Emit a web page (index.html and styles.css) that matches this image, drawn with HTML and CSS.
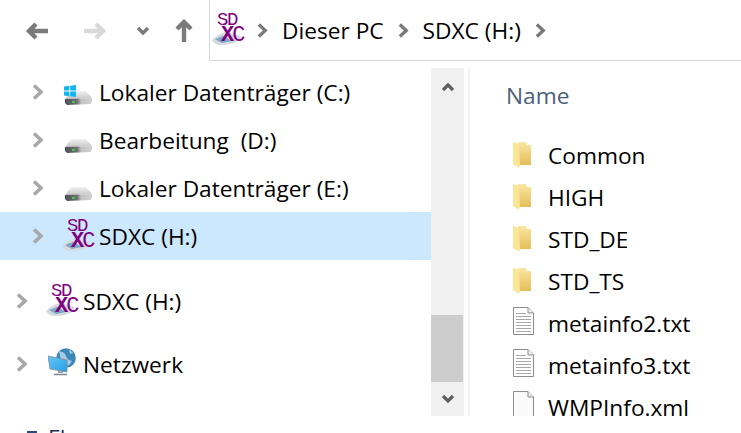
FILE: index.html
```html
<!DOCTYPE html>
<html lang="de">
<head>
<meta charset="utf-8">
<title>SDXC (H:)</title>
<link rel="stylesheet" href="styles.css">
</head>
<body>
<svg class="defs" width="0" height="0" aria-hidden="true">
  <defs>
    <linearGradient id="top" x1="0" y1="0" x2="0" y2="1"><stop offset="0" stop-color="#f2f2f2"/><stop offset="1" stop-color="#c6c6c6"/></linearGradient>
    <linearGradient id="front" x1="0" y1="0" x2="1" y2="0"><stop offset="0" stop-color="#4f5254"/><stop offset=".45" stop-color="#6d7072"/><stop offset=".6" stop-color="#c2c2c2"/><stop offset="1" stop-color="#d2d2d2"/></linearGradient>
    <linearGradient id="fold" x1="0" y1="0" x2="0" y2="1"><stop offset="0" stop-color="#f9e7a3"/><stop offset="1" stop-color="#e5bd58"/></linearGradient>
    <linearGradient id="mon" x1="0" y1="0" x2="1" y2="1"><stop offset="0" stop-color="#63c7f7"/><stop offset="1" stop-color="#2a9de6"/></linearGradient>
    <symbol id="chev" viewBox="0 0 12 16"><path d="M2 1.500 9 8 2 14.500" fill="none" stroke="currentColor" stroke-width="3.600"/></symbol>
    <symbol id="drive" viewBox="0 0 28 16"><path d="M7 1H22L28 8 1 9Z" fill="url(#top)"/><path d="M1 9 28 8V12L26 14 3 15 1 13Z" fill="url(#front)"/><rect x="8" y="11" width="3" height="2" fill="#45c84a"/></symbol>
    <symbol id="card" viewBox="0 0 34 36">
      <path d="M0 28Q8 20 16 20L28 24V28Q20 33 10 33 2 33 0 28Z" fill="#d5dade"/><path d="M3 27 11 24 20 29 10 31Z" fill="#7ba7c9"/>
    </symbol>
    <symbol id="folder" viewBox="0 0 18 27"><path d="M5 1H13L14 4H18V24H5Z" fill="url(#fold)"/><path d="M0 1 6 3 7 24 6 27 0 23Z" fill="#fbe596"/></symbol>
    <symbol id="doc" viewBox="0 0 21 28"><path d="M.5.5H15L20.500 6V27.500H.5Z" fill="#fff" stroke="#8d8d8d"/><path d="M15 .5V6H20.500" fill="#eee" stroke="#8d8d8d"/><path d="M3 6.500H13M3 9.500H18M3 12.500H18M3 15.500H18M3 18.500H18M3 21.500H18M3 24.500H18" stroke="#a8a8a8"/></symbol>
  </defs>
</svg>
<div class="window">
  <header class="toolbar">
    <nav class="nav">
      <svg class="nav-back" width="24" height="20" viewBox="0 0 24 20"><path d="M23 10H5M11 3 4 10l7 7" fill="none" stroke="#7a7a7a" stroke-width="4.400"/></svg>
      <svg class="nav-fwd" width="24" height="20" viewBox="0 0 24 20"><path d="M1 10H19M13 3l7 7-7 7" fill="none" stroke="#d9d9d9" stroke-width="4.400"/></svg>
      <svg class="nav-down" width="14" height="10" viewBox="0 0 14 10"><path d="M2 2 7 7l5-5" fill="none" stroke="#7a7a7a" stroke-width="3.400"/></svg>
      <svg class="nav-up" width="20" height="24" viewBox="0 0 20 24"><path d="M10 23V5M3 10 10 3l7 7" fill="none" stroke="#7a7a7a" stroke-width="4.400"/></svg>
    </nav>
    <div class="address">
      <span class="sd sd-addr"><svg class="card"><use href="#card"/></svg><b class="l1">SD</b><b class="l2"><strong>X</strong>C</b></span>
      <svg class="crumb"><use href="#chev"/></svg>
      <span class="crumb-text">Dieser PC</span>
      <svg class="crumb"><use href="#chev"/></svg>
      <span class="crumb-text">SDXC (H:)</span>
      <svg class="crumb"><use href="#chev"/></svg>
    </div>
  </header>
  <main class="panes">
    <aside class="tree">
      <div class="rows">
        <div class="row">
          <svg class="exp"><use href="#chev"/></svg>
          <span class="ico"><svg class="hdd"><use href="#drive"/></svg><svg class="win" viewBox="0 0 12 12"><path d="M0 1.500 5.300.8V5.600H0ZM6.200.7 12 0V5.600H6.200ZM0 6.400H5.300V11.200L0 10.500ZM6.200 6.400H12V12L6.200 11.300Z" fill="#12b5ee"/></svg></span>
          <span>Lokaler Datenträger (C:)</span>
        </div>
        <div class="row"><svg class="exp"><use href="#chev"/></svg><span class="ico"><svg class="hdd"><use href="#drive"/></svg></span><span>Bearbeitung&nbsp; (D:)</span></div>
        <div class="row"><svg class="exp"><use href="#chev"/></svg><span class="ico"><svg class="hdd"><use href="#drive"/></svg></span><span>Lokaler Datenträger (E:)</span></div>
        <div class="row selected"><svg class="exp"><use href="#chev"/></svg><span class="sd sd-tree"><svg class="card"><use href="#card"/></svg><b class="l1">SD</b><b class="l2"><strong>X</strong>C</b></span><span>SDXC (H:)</span></div>
        <div class="row lvl1 gap1"><svg class="exp"><use href="#chev"/></svg><span class="sd sd-tree"><svg class="card"><use href="#card"/></svg><b class="l1">SD</b><b class="l2"><strong>X</strong>C</b></span><span>SDXC (H:)</span></div>
        <div class="row lvl1 gap2"><svg class="exp"><use href="#chev"/></svg>
          <svg class="net" viewBox="0 0 28 28"><circle cx="18" cy="10" r="9.800" fill="#3c86b8"/><path d="M11 3q6 1 7 5t6 5l-3 4H14ZM21 1l4 4-3 1Z" fill="#a4cbe3"/><path d="M0 8 19 12V24L2 21Z" fill="url(#mon)" stroke="#7e8c96" stroke-width=".8"/><path d="M10 23h5v2h-5Z" fill="#9aa5ad"/><path d="M6 26.500H19" stroke="#7d8890" stroke-width="1.500"/></svg>
          <span>Netzwerk</span></div>
      </div>
      <div class="scrollbar">
        <svg class="sb-arrow" width="14" height="10" viewBox="0 0 14 10"><path d="M2 8 7 3l5 5" fill="none" stroke="#5f5f5f" stroke-width="3.200"/></svg>
        <div class="sb-thumb"></div>
        <svg class="sb-arrow" width="14" height="10" viewBox="0 0 14 10"><path d="M2 2 7 7l5-5" fill="none" stroke="#5f5f5f" stroke-width="3.200"/></svg>
      </div>
    </aside>
    <section class="files">
      <div class="col-head">Name</div>
      <div class="file-list">
        <div class="file"><svg class="f-folder"><use href="#folder"/></svg><span>Common</span></div>
        <div class="file"><svg class="f-folder"><use href="#folder"/></svg><span>HIGH</span></div>
        <div class="file"><svg class="f-folder"><use href="#folder"/></svg><span>STD_DE</span></div>
        <div class="file"><svg class="f-folder"><use href="#folder"/></svg><span>STD_TS</span></div>
        <div class="file"><svg class="f-doc"><use href="#doc"/></svg><span>metainfo2.txt</span></div>
        <div class="file"><svg class="f-doc"><use href="#doc"/></svg><span>metainfo3.txt</span></div>
        <div class="file"><svg class="f-doc" viewBox="0 0 21 28"><path d="M.5.5H15L20.500 6V27.500H.5Z" fill="#fafafa" stroke="#8d8d8d"/><path d="M15 .5V6H20.500" fill="#eee" stroke="#8d8d8d"/></svg><span>WMPInfo.xml</span></div>
      </div>
    </section>
  </main>
  <footer class="peek"><span class="peek-mark"></span><span class="peek-text">Fl</span></footer>
</div>
</body>
</html>
```
FILE: styles.css
```css
* { box-sizing: border-box; }
html, body { margin: 0; padding: 0; background: #fff; }
body { width: 741px; height: 433px; overflow: hidden; font-family: "Open Sans", "Noto Sans", sans-serif; font-size: 22.7px; color: #000; }
.defs { display: block; height: 0; }
.window { display: flex; flex-direction: column; width: 741px; height: 433px; overflow: hidden; }
.toolbar { display: flex; height: 61px; flex: none; }
.nav { width: 209px; flex: none; display: flex; align-items: center; padding: 1px 0 0 25px; }
.nav-fwd { margin-left: 34px; }
.nav-down { margin-left: 29px; }
.nav-up { margin-left: 24px; }
.address { flex: 1; display: flex; align-items: center; border-left: 1px solid #d9d9d9; border-bottom: 1px solid #d9d9d9; padding-left: 2px; }
.crumb { width: 11px; height: 15px; color: #7a7a7a; margin: 0 14px; flex: none; }
.crumb-text { white-space: nowrap; }
.sd { position: relative; display: block; flex: none; width: 34px; height: 36px; }
.sd-addr { margin-right: -3px; }
.sd .card { width: 34px; height: 36px; display: block; }
.sd b { position: absolute; font-family: "Liberation Mono", monospace; font-weight: 400; color: #800080; white-space: nowrap; }
.sd strong { font-weight: 700; }
.sd .l1 { left: 5px; top: 1px; font-size: 19px; line-height: 15px; letter-spacing: -1.500px; }
.sd .l2 { left: 9px; top: 16px; font-size: 22px; line-height: 16px; letter-spacing: -2px; }
.panes { flex: 1; display: flex; min-height: 0; }
.tree { width: 470px; flex: none; display: flex; border-right: 2px solid #f4f4f4; margin-top: 7px; }
.rows { width: 431px; flex: none; }
.row { display: flex; align-items: center; height: 48px; padding-left: 32px; white-space: nowrap; }
.row.selected { background: #cce8ff; }
.row.lvl1 { padding-left: 16px; }
.gap1 { margin-top: 17px; }
.gap2 { margin-top: 15px; }
.exp { width: 12px; height: 16px; color: #a8a8a8; flex: none; margin-right: 20px; }
.ico { position: relative; display: block; width: 35px; height: 26px; flex: none; }
.hdd { position: absolute; left: 0; top: 11px; width: 28px; height: 16px; }
.win { position: absolute; left: 0; top: 6px; width: 12px; height: 12px; }
.sd-tree { margin-left: -2px; margin-right: 3px; }
.net { width: 28px; height: 28px; flex: none; margin-right: 7px; margin-top: -4px; }
.scrollbar { width: 33px; height: 348px; background: #f0f0f0; display: flex; flex-direction: column; align-items: center; justify-content: space-between; padding-top: 14px; position: relative; }
.sb-thumb { position: absolute; left: 0; right: 1px; top: 247px; height: 67px; background: #cdcdcd; }
.sb-arrow { display: block; }
.scrollbar .sb-arrow:last-child { margin-bottom: 12px; }
.files { flex: 1; padding-left: 36px; margin-top: 7px; min-width: 0; }
.col-head { color: #4c607a; height: 65px; padding-top: 12px; }
.file-list { height: 283px; overflow: hidden; }
.file { display: flex; align-items: center; height: 42px; padding-left: 7px; white-space: nowrap; }
.file span { margin-left: 17px; padding-top: 2px; }
.f-folder { width: 18px; height: 27px; flex: none; }
.f-doc { width: 21px; height: 28px; flex: none; margin-right: -3px; margin-top: -3px; }
.peek { height: 17px; flex: none; display: flex; align-items: flex-start; overflow: hidden; padding-left: 27px; }
.peek-mark { display: block; width: 10px; height: 2px; background: #2a4a7a; margin-top: 15px; }
.peek-text { margin-left: 11px; margin-top: 11px; line-height: 22px; color: #1f2f55; }
```
